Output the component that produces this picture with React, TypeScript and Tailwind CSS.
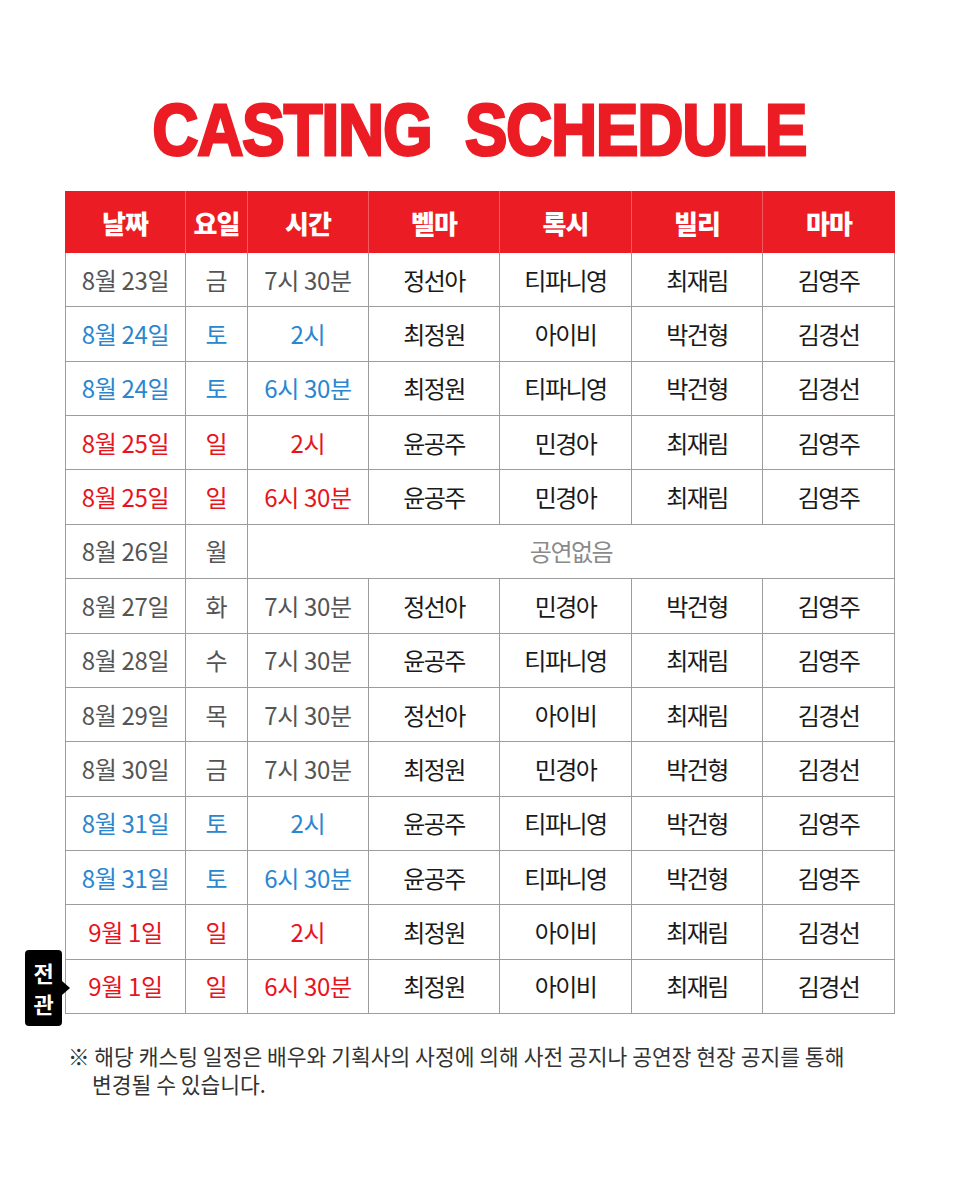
import React from 'react';

type Tone = 'gray' | 'blue' | 'red';

type Row = {
  date: string;
  day: string;
  time?: string;
  cast?: [string, string, string, string];
  tone: Tone;
};

const rows: Row[] = [
  { date: '8월 23일', day: '금', time: '7시 30분', cast: ['정선아', '티파니영', '최재림', '김영주'], tone: 'gray' },
  { date: '8월 24일', day: '토', time: '2시', cast: ['최정원', '아이비', '박건형', '김경선'], tone: 'blue' },
  { date: '8월 24일', day: '토', time: '6시 30분', cast: ['최정원', '티파니영', '박건형', '김경선'], tone: 'blue' },
  { date: '8월 25일', day: '일', time: '2시', cast: ['윤공주', '민경아', '최재림', '김영주'], tone: 'red' },
  { date: '8월 25일', day: '일', time: '6시 30분', cast: ['윤공주', '민경아', '최재림', '김영주'], tone: 'red' },
  { date: '8월 26일', day: '월', tone: 'gray' },
  { date: '8월 27일', day: '화', time: '7시 30분', cast: ['정선아', '민경아', '박건형', '김영주'], tone: 'gray' },
  { date: '8월 28일', day: '수', time: '7시 30분', cast: ['윤공주', '티파니영', '최재림', '김영주'], tone: 'gray' },
  { date: '8월 29일', day: '목', time: '7시 30분', cast: ['정선아', '아이비', '최재림', '김경선'], tone: 'gray' },
  { date: '8월 30일', day: '금', time: '7시 30분', cast: ['최정원', '민경아', '박건형', '김경선'], tone: 'gray' },
  { date: '8월 31일', day: '토', time: '2시', cast: ['윤공주', '티파니영', '박건형', '김영주'], tone: 'blue' },
  { date: '8월 31일', day: '토', time: '6시 30분', cast: ['윤공주', '티파니영', '박건형', '김영주'], tone: 'blue' },
  { date: '9월 1일', day: '일', time: '2시', cast: ['최정원', '아이비', '최재림', '김경선'], tone: 'red' },
  { date: '9월 1일', day: '일', time: '6시 30분', cast: ['최정원', '아이비', '최재림', '김경선'], tone: 'red' },
];

const toneClass: Record<Tone, string> = {
  gray: 'text-[#555555]',
  blue: 'text-[#2a86cf]',
  red: 'text-[#e8141d]',
};

const headers = ['날짜', '요일', '시간', '벨마', '록시', '빌리', '마마'];
const cols = 'grid grid-cols-[121px_62px_121px_131px_132px_131px_132px]';

const cell = 'flex items-center justify-center border-r border-b border-[#9c9c9c]';

export default function App() {
  return (
    <div
      className="w-[960px] h-[1200px] bg-white overflow-hidden"
      style={{ fontFamily: '"Noto Sans CJK KR", "Noto Sans", sans-serif' }}
    >
      {/* title */}
      <div className="pt-[94px] h-[191px] flex justify-center">
        <h1
          className="text-[72px] leading-[72px] font-bold text-[#ec1c24] scale-x-[0.88] whitespace-nowrap tracking-[-1px] [-webkit-text-stroke:3px_#ec1c24]"
          style={{ fontFamily: '"Liberation Sans", Arial, sans-serif' }}
        >
          CASTING&nbsp;&nbsp;SCHEDULE
        </h1>
      </div>

      {/* table */}
      <div className="relative w-[830px] mx-auto">
        <div className={`${cols} h-[62px] bg-[#ec1c24]`}>
          {headers.map((h, i) => (
            <div
              key={h}
              className={`flex items-center justify-center text-white text-[26px] font-black tracking-[-1px] ${
                i < headers.length - 1 ? 'border-r border-[#f3595e]' : ''
              }`}
            >
              {h}
            </div>
          ))}
        </div>

        {rows.map((r, idx) => (
          <div key={idx} className={`${cols} h-[54.36px] text-[24px]`}>
            <div className={`${cell} border-l ${toneClass[r.tone]} tracking-[-0.3px]`}>{r.date}</div>
            <div className={`${cell} ${toneClass[r.tone]}`}>{r.day}</div>
            {r.cast ? (
              <>
                <div className={`${cell} ${toneClass[r.tone]} tracking-[-0.3px]`}>{r.time}</div>
                {r.cast.map((name, j) => (
                  <div key={j} className={`${cell} text-[#1a1a1a] tracking-[-1.5px]`}>
                    {name}
                  </div>
                ))}
              </>
            ) : (
              <div className={`${cell} col-span-5 text-[#8a8a8a] tracking-[-1.5px]`}>공연없음</div>
            )}
          </div>
        ))}

        {/* 전관 badge */}
        <div className="absolute left-[-40px] top-[759px] w-[37px] h-[76px] bg-black rounded-[4px] flex flex-col items-center justify-center text-white text-[22px] font-bold leading-[31px]">
          <span>전</span>
          <span>관</span>
          <div className="absolute right-[-8px] top-[31px] w-0 h-0 border-y-[7px] border-y-transparent border-l-[8px] border-l-black" />
        </div>
      </div>

      {/* note */}
      <div className="w-[830px] mx-auto mt-[28px] pl-[3px] text-[21.5px] leading-[28px] text-[#333333]">
        <p>※ 해당 캐스팅 일정은 배우와 기획사의 사정에 의해 사전 공지나 공연장 현장 공지를 통해</p>
        <p className="pl-[24px]">변경될 수 있습니다.</p>
      </div>
    </div>
  );
}
